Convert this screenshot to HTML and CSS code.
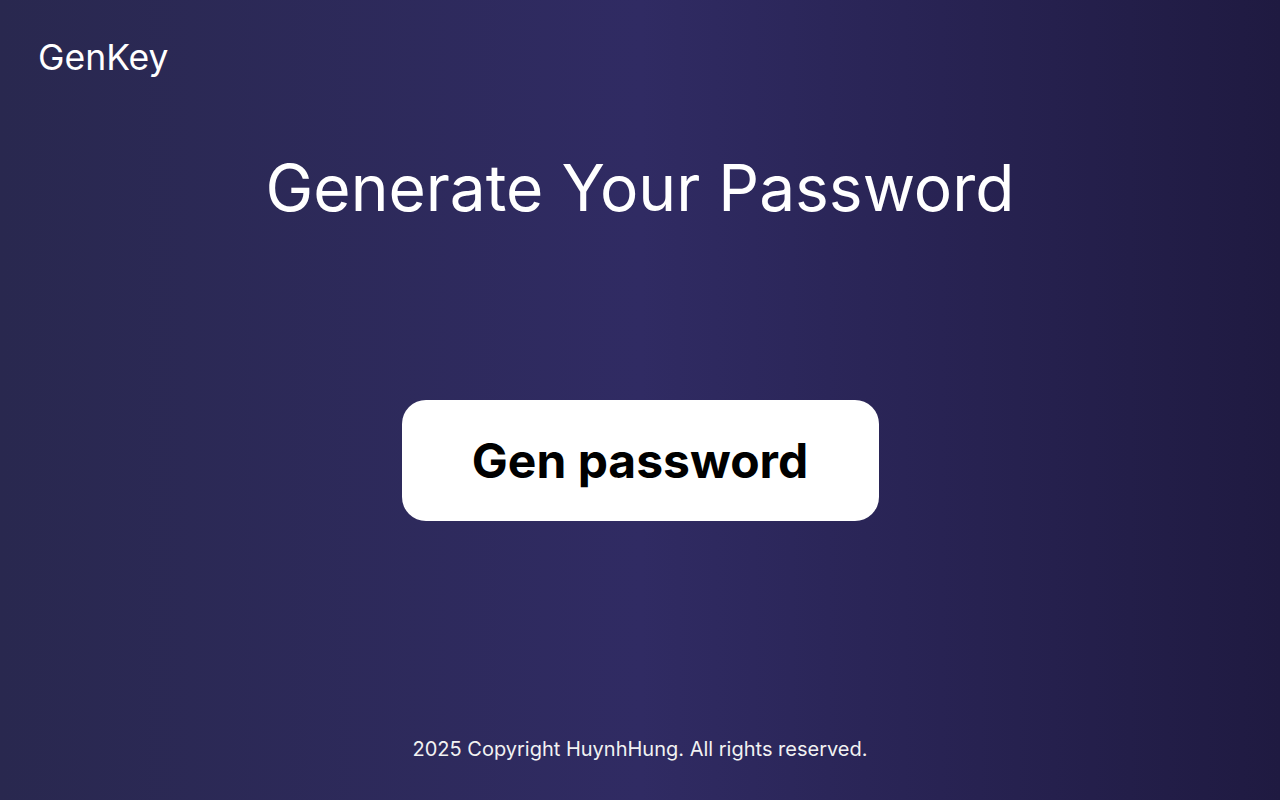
FILE: index.html
```html
<!DOCTYPE html>
<html lang="en">
<head>
<meta charset="utf-8">
<title>GenKey</title>
<link rel="stylesheet" href="styles.css">
</head>
<body>
<div class="page">
  <header class="header">
    <div class="logo">GenKey</div>
  </header>
  <main class="main">
    <h1 class="title">Generate Your Password</h1>
    <div class="action">
      <button class="gen-btn" type="button">Gen password</button>
    </div>
  </main>
  <footer class="footer">2025 Copyright HuynhHung. All rights reserved.</footer>
</div>
</body>
</html>
```

FILE: styles.css
```css
* { box-sizing: border-box; }
html, body { margin: 0; padding: 0; }
body {
  font-family: Inter, "Noto Sans", sans-serif;
  color: #ffffff;
  background: linear-gradient(to right, #29284f 0%, #302b63 50%, #1f1a41 100%);
  min-height: 100vh;
}
.page {
  height: 800px;
  display: flex;
  flex-direction: column;
}
.header {
  padding: 36px 38px 0;
}
.logo {
  font-size: 35.5px;
  line-height: 44px;
  font-weight: 400;
}
.main {
  flex: 1;
  display: flex;
  flex-direction: column;
  align-items: center;
}
.title {
  margin: 70px 0 0;
  font-size: 64px;
  line-height: 76px;
  font-weight: 400;
}
.action {
  margin-top: 174px;
}
.gen-btn {
  width: 477px;
  height: 121px;
  border: none;
  border-radius: 24px;
  background: #ffffff;
  color: #000000;
  font-family: Inter, "Noto Sans", sans-serif;
  font-size: 48px;
  font-weight: 700;
  cursor: pointer;
}
.footer {
  text-align: center;
  font-size: 20px;
  line-height: 24px;
  padding-bottom: 39px;
  color: #f2f2f2;
}
```
